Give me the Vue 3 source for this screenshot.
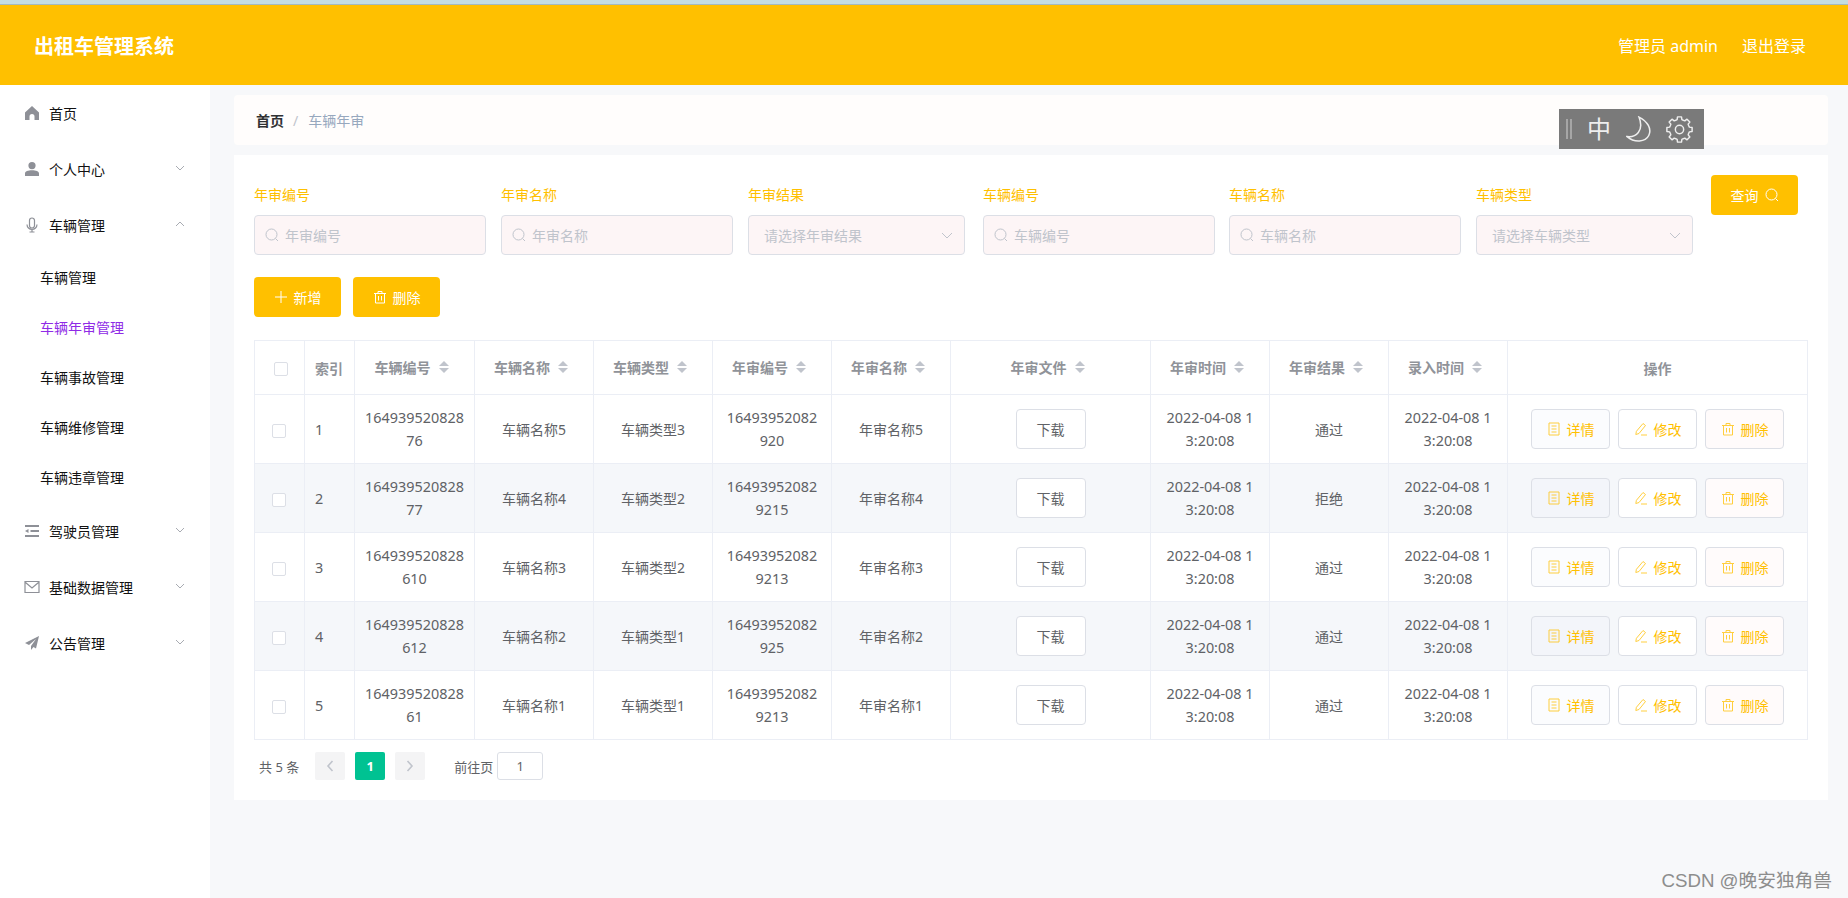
<template>
  <div class="page">
    <div class="top-strip"></div>
    <header class="topbar">
      <div class="title">出租车管理系统</div>
      <div class="user">
        <span>管理员 admin</span>
        <span>退出登录</span>
      </div>
    </header>

    <div class="body">
      <aside class="sidebar">
        <template v-for="m in menus" :key="m.name">
          <div class="menu-item">
            <svg class="menu-icon" viewBox="0 0 16 16">
              <path
                :d="icons[m.icon].d"
                :fill="icons[m.icon].stroke ? 'none' : 'currentColor'"
                :stroke="icons[m.icon].stroke ? 'currentColor' : 'none'"
                stroke-width="1.2"
              />
            </svg>
            <span>{{ m.name }}</span>
            <svg v-if="m.arrow" class="menu-arrow" viewBox="0 0 10 6">
              <path :d="m.open ? 'M1 5l4-4 4 4' : 'M1 1l4 4 4-4'" fill="none" stroke="currentColor" />
            </svg>
          </div>
          <template v-if="m.children">
            <div
              v-for="c in m.children"
              :key="c"
              class="sub-item"
              :class="{ active: c === '车辆年审管理' }"
            >
              {{ c }}
            </div>
          </template>
        </template>
      </aside>

      <main class="main">
        <div class="crumb">
          <span class="crumb-home">首页</span>
          <span class="crumb-sep">/</span>
          <span class="crumb-cur">车辆年审</span>
        </div>

        <section class="card">
          <div class="filters">
            <div v-for="f in filters" :key="f.label" class="field" :class="{ 'is-select': f.select }">
              <label>{{ f.label }}</label>
              <div class="control">
                <svg v-if="!f.select" class="ctl-search" viewBox="0 0 14 14">
                  <circle cx="6.5" cy="6.5" r="5.5" fill="none" stroke="currentColor" />
                  <path d="M10.5 10.5l2.5 2.5" stroke="currentColor" />
                </svg>
                <span>{{ f.placeholder }}</span>
                <svg v-if="f.select" class="ctl-arrow" viewBox="0 0 12 7">
                  <path d="M1 1l5 5 5-5" fill="none" stroke="currentColor" />
                </svg>
              </div>
            </div>
            <button class="btn-primary query">
              查询
              <svg class="btn-icon" viewBox="0 0 14 14">
                <circle cx="6.5" cy="6.5" r="5.5" fill="none" stroke="currentColor" />
                <path d="M10.5 10.5l2.5 2.5" stroke="currentColor" />
              </svg>
            </button>
          </div>

          <div class="actions">
            <button class="btn-primary">
              <svg class="btn-icon" viewBox="0 0 14 14">
                <path d="M7 1v12M1 7h12" fill="none" stroke="currentColor" />
              </svg>
              新增
            </button>
            <button class="btn-primary">
              <svg class="btn-icon" viewBox="0 0 14 14">
                <path :d="trashPath" fill="none" stroke="currentColor" />
              </svg>
              删除
            </button>
          </div>

          <table class="grid">
            <colgroup>
              <col v-for="(w, i) in colWidths" :key="i" :style="{ width: w + 'px' }" />
            </colgroup>
            <thead>
              <tr>
                <th><span class="check head-check"></span></th>
                <th class="left">索引</th>
                <th v-for="h in sortHeads" :key="h">
                  <span class="sort-head">
                    {{ h }}
                    <span class="carets"><i class="up"></i><i class="down"></i></span>
                  </span>
                </th>
                <th>操作</th>
              </tr>
            </thead>
            <tbody>
              <tr v-for="(r, i) in rows" :key="i" :class="{ stripe: i % 2 === 1 }">
                <td><span class="check row-check"></span></td>
                <td class="left num">{{ i + 1 }}</td>
                <td class="num">{{ prefix + r.no }}</td>
                <td>{{ r.name }}</td>
                <td>{{ r.type }}</td>
                <td class="num">{{ auditPrefix + r.audit }}</td>
                <td>{{ r.auditName }}</td>
                <td><button class="plain download">下载</button></td>
                <td class="num">{{ stamp }}</td>
                <td>{{ r.result }}</td>
                <td class="num">{{ stamp }}</td>
                <td>
                  <div class="ops">
                    <button class="plain op op-detail">
                      <svg class="op-icon" viewBox="0 0 14 14">
                        <path d="M2 1h10v12H2zM4.5 4h5M4.5 7h5M4.5 10h5" fill="none" stroke="currentColor" />
                      </svg>
                      详情
                    </button>
                    <button class="plain op op-edit">
                      <svg class="op-icon" viewBox="0 0 14 14">
                        <path d="M9 1.5l2.5 2L5 11.5l-3.2 1 .6-3.2zM7 13h6" fill="none" stroke="currentColor" />
                      </svg>
                      修改
                    </button>
                    <button class="plain op op-del">
                      <svg class="op-icon" viewBox="0 0 14 14">
                        <path :d="trashPath" fill="none" stroke="currentColor" />
                      </svg>
                      删除
                    </button>
                  </div>
                </td>
              </tr>
            </tbody>
          </table>

          <div class="pager">
            <span class="total">共 5 条</span>
            <span class="page-btn">
              <svg viewBox="0 0 8 12"><path d="M6.5 1L2 6l4.5 5" fill="none" stroke="currentColor" stroke-width="1.6" /></svg>
            </span>
            <span class="page-btn current">1</span>
            <span class="page-btn">
              <svg viewBox="0 0 8 12"><path d="M1.5 1L6 6l-4.5 5" fill="none" stroke="currentColor" stroke-width="1.6" /></svg>
            </span>
            <span class="goto">前往页</span>
            <span class="goto-input">1</span>
          </div>
        </section>
      </main>
    </div>

    <div class="float-tools">
      <span class="handle"></span>
      <span class="zh">中</span>
      <svg class="tool moon" viewBox="0 0 24 24">
        <path d="M12 1C20 5 24 12 21 18C18 24 8 25 1 19C9 20 17 14 12 1Z" fill="none" stroke="currentColor" stroke-width="1.4" />
      </svg>
      <svg class="tool gear" viewBox="0 0 26 26">
        <path :d="gearPath" fill="none" stroke="currentColor" stroke-width="1.4" stroke-linejoin="round" />
        <circle cx="13" cy="13" r="4" fill="none" stroke="currentColor" stroke-width="1.4" />
      </svg>
    </div>

    <div class="mark">CSDN @晚安独角兽</div>
  </div>
</template>

<script setup>
const icons = {
  home: { d: "M8 1l7 6.5V15h-4.5v-3.5a2.5 2.5 0 0 0-5 0V15H1V7.5z" },
  user: { d: "M8 1a3.6 3.6 0 1 1 0 7.2A3.6 3.6 0 0 1 8 1zM1 15v-2.5C1 10.2 4 9.2 8 9.2s7 1 7 3.3V15z" },
  mic: { d: "M5.5 3.5a2.5 2.5 0 0 1 5 0v5a2.5 2.5 0 0 1-5 0zM3 7.5a5 5 0 0 0 10 0M8 12.5V15M5.5 15h5", stroke: true },
  indent: { d: "M1 2h14v2H1zM6.5 7H15v2H6.5zM1 12h14v2H1zM1 8l3.5-2v4z" },
  mail: { d: "M1 2.5h14v11H1zM1.5 3.5L8 9l6.5-5.5", stroke: true },
  plane: { d: "M15 1L1 8l4 2 7-6-5 7v4l2.5-3 2.5 1.5z" },
};

const menus = [
  { name: "首页", icon: "home" },
  { name: "个人中心", icon: "user", arrow: true },
  {
    name: "车辆管理",
    icon: "mic",
    arrow: true,
    open: true,
    children: ["车辆管理", "车辆年审管理", "车辆事故管理", "车辆维修管理", "车辆违章管理"],
  },
  { name: "驾驶员管理", icon: "indent", arrow: true },
  { name: "基础数据管理", icon: "mail", arrow: true },
  { name: "公告管理", icon: "plane", arrow: true },
];

const filters = [
  { label: "年审编号", placeholder: "年审编号" },
  { label: "年审名称", placeholder: "年审名称" },
  { label: "年审结果", placeholder: "请选择年审结果", select: true },
  { label: "车辆编号", placeholder: "车辆编号" },
  { label: "车辆名称", placeholder: "车辆名称" },
  { label: "车辆类型", placeholder: "请选择车辆类型", select: true },
];

const colWidths = [50, 50, 120, 119, 119, 119, 119, 200, 119, 119, 119, 300];
const sortHeads = ["车辆编号", "车辆名称", "车辆类型", "年审编号", "年审名称", "年审文件", "年审时间", "年审结果", "录入时间"];

const prefix = "164939520828\n";
const auditPrefix = "16493952082\n";
const stamp = "2022-04-08 1\n3:20:08";

const rows = [
  { no: "76", name: "车辆名称5", type: "车辆类型3", audit: "920", auditName: "年审名称5", result: "通过" },
  { no: "77", name: "车辆名称4", type: "车辆类型2", audit: "9215", auditName: "年审名称4", result: "拒绝" },
  { no: "610", name: "车辆名称3", type: "车辆类型2", audit: "9213", auditName: "年审名称3", result: "通过" },
  { no: "612", name: "车辆名称2", type: "车辆类型1", audit: "925", auditName: "年审名称2", result: "通过" },
  { no: "61", name: "车辆名称1", type: "车辆类型1", audit: "9213", auditName: "年审名称1", result: "通过" },
];

const trashPath = "M1 3.5h12M5 3.5V1.5h4v2M2.5 3.5V13h9V3.5M5.5 6v4.5M8.5 6v4.5";

// gear outline, 8 teeth
function buildGear() {
  const pts = [];
  const teeth = 8;
  for (let i = 0; i < teeth; i++) {
    const a = (i / teeth) * Math.PI * 2;
    const step = (Math.PI * 2) / teeth;
    const ring = [
      [9.6, a - step * 0.5],
      [9.8, a - step * 0.3],
      [12.3, a - step * 0.2],
      [12.3, a + step * 0.2],
      [9.8, a + step * 0.3],
    ];
    ring.forEach(([r, t]) => pts.push([13 + r * Math.cos(t), 13 + r * Math.sin(t)]));
  }
  return "M" + pts.map((p) => p[0].toFixed(2) + " " + p[1].toFixed(2)).join("L") + "Z";
}
const gearPath = buildGear();
</script>

<style>
html,
body {
  margin: 0;
  background: #f7f8fa;
}
</style>

<style scoped>
.page {
  position: relative;
  height: 898px;
  overflow: hidden;
  display: flex;
  flex-direction: column;
  background: #f7f8fa;
  font-family: "Noto Sans", "Noto Sans CJK SC", sans-serif;
  font-size: 14px;
  color: #606266;
}

.top-strip {
  height: 4px;
  flex: none;
  background: #c4dde2;
  border-bottom: 1px solid #a3babf;
}

.topbar {
  flex: none;
  height: 80px;
  background: #ffc000;
  color: #fff;
  display: flex;
  align-items: center;
  justify-content: space-between;
  padding: 0 42px 0 34px;
}
.title {
  font-size: 20px;
  font-weight: 700;
}
.user {
  display: flex;
  gap: 24px;
  font-size: 16px;
}

.body {
  flex: 1;
  display: flex;
  min-height: 0;
}

.sidebar {
  flex: none;
  width: 210px;
  background: #fff;
  color: #111;
}
.menu-item {
  height: 56px;
  display: flex;
  align-items: center;
  padding-left: 24px;
  position: relative;
}
.menu-icon {
  width: 16px;
  height: 16px;
  color: #8e9097;
  margin-right: 9px;
  flex: none;
}
.menu-arrow {
  position: absolute;
  left: 175px;
  top: 24px;
  width: 10px;
  height: 6px;
  color: #a8abb2;
}
.sub-item {
  height: 50px;
  line-height: 50px;
  padding-left: 40px;
}
.sub-item.active {
  color: #8f2be6;
}

.main {
  flex: 1;
  padding: 10px 20px 0 24px;
}
.crumb {
  height: 50px;
  display: flex;
  align-items: center;
  padding-left: 22px;
  background: #fffdfc;
  border-radius: 4px;
  margin-bottom: 10px;
}
.crumb-home {
  font-weight: 700;
  color: #303133;
}
.crumb-sep {
  margin: 0 10px 0 9px;
  color: #c0c4cc;
}
.crumb-cur {
  color: #97a8be;
}

.card {
  background: #fff;
  padding: 20px;
}

.filters {
  display: flex;
  gap: 15px;
}
.field {
  width: 232px;
  flex: none;
}
.field:nth-child(4) {
  margin-right: -1px;
}
.field.is-select {
  width: 217px;
  margin-right: 3px;
}
.field label {
  display: block;
  height: 40px;
  line-height: 40px;
  color: #ffc000;
}
.control {
  height: 40px;
  box-sizing: border-box;
  border: 1px solid #dcdfe6;
  border-radius: 4px;
  background: #fdf5f6;
  color: #c0c4cc;
  display: flex;
  align-items: center;
  padding-left: 10px;
  position: relative;
}
.is-select .control {
  padding-left: 15px;
}
.ctl-search {
  width: 14px;
  height: 14px;
  margin-right: 6px;
}
.ctl-arrow {
  position: absolute;
  right: 11px;
  top: 16px;
  width: 12px;
  height: 7px;
}

.btn-primary {
  width: 87px;
  height: 40px;
  flex: none;
  border: 0;
  border-radius: 4px;
  background: #ffc000;
  color: #fff;
  font: inherit;
  display: inline-flex;
  align-items: center;
  justify-content: center;
  gap: 6px;
  padding: 0;
}
.btn-icon {
  width: 14px;
  height: 14px;
}

.actions {
  display: flex;
  gap: 12px;
  margin: 22px 0 23px;
}

.grid {
  width: 1553px;
  table-layout: fixed;
  border-collapse: collapse;
}
.grid th,
.grid td {
  border: 1px solid #ebeef5;
  padding: 0 10px;
  text-align: center;
  box-sizing: border-box;
}
.grid th {
  height: 54px;
  color: #909399;
  font-weight: 700;
}
.grid td {
  height: 69px;
  line-height: 23px;
  white-space: pre-line;
}
.grid td.num {
  font-size: 14.4px;
}
.grid .left {
  text-align: left;
}
.stripe td {
  background: #f5f7fa;
}

.check {
  display: inline-block;
  vertical-align: middle;
  width: 14px;
  height: 14px;
  box-sizing: border-box;
  border: 1px solid #dcdfe6;
  border-radius: 2px;
  background: #fff;
}
.head-check {
  margin-left: 2px;
}
.row-check {
  margin-left: -2px;
}

.sort-head {
  display: inline-flex;
  align-items: center;
  gap: 8px;
  padding-right: 6px;
  margin-top: -3px;
}
.carets {
  display: inline-flex;
  flex-direction: column;
  gap: 2px;
}
.carets i {
  display: block;
  width: 0;
  height: 0;
  border-left: 5px solid transparent;
  border-right: 5px solid transparent;
}
.carets .up {
  border-bottom: 5px solid #c0c4cc;
}
.carets .down {
  border-top: 5px solid #c0c4cc;
}

.plain {
  height: 40px;
  border: 1px solid #dcdfe6;
  border-radius: 4px;
  background: #fff;
  color: #606266;
  font: inherit;
  padding: 0;
}
.download {
  width: 70px;
}
.ops {
  display: flex;
  justify-content: center;
  gap: 8px;
}
.op {
  width: 79px;
  color: #ffc000;
  display: inline-flex;
  align-items: center;
  justify-content: center;
  gap: 6px;
}
.op-detail {
  background: rgba(235, 240, 250, 0.2);
}
.op-del {
  background: #fffbfb;
}
.op-icon {
  width: 14px;
  height: 14px;
  opacity: 0.75;
}

.pager {
  display: flex;
  align-items: center;
  height: 28px;
  margin-top: 12px;
  font-size: 13px;
}
.total {
  margin-left: 5px;
  margin-right: 16px;
}
.page-btn {
  width: 30px;
  height: 28px;
  margin-right: 10px;
  background: #f4f4f5;
  color: #c0c4cc;
  border-radius: 2px;
  display: flex;
  align-items: center;
  justify-content: center;
}
.page-btn svg {
  width: 8px;
  height: 12px;
}
.page-btn.current {
  background: #00c292;
  color: #fff;
  font-weight: 700;
}
.goto {
  margin-left: 19px;
  margin-right: 4px;
}
.goto-input {
  width: 46px;
  height: 28px;
  box-sizing: border-box;
  border: 1px solid #dcdfe6;
  border-radius: 3px;
  background: #fff;
  display: flex;
  align-items: center;
  justify-content: center;
}

.float-tools {
  position: absolute;
  left: 1559px;
  top: 109px;
  width: 145px;
  height: 40px;
  box-sizing: border-box;
  background: #7a7a7a;
  color: #eee;
  display: flex;
  align-items: center;
  padding-left: 7px;
}
.handle {
  width: 2px;
  height: 20px;
  border-left: 2px solid #a6a6a6;
  border-right: 2px solid #a6a6a6;
  margin-right: 15px;
}
.zh {
  font-size: 24px;
  line-height: 1;
  margin-right: 15px;
}
.tool {
  flex: none;
}
.moon {
  width: 26px;
  height: 26px;
  margin-right: 14px;
}
.gear {
  width: 27px;
  height: 27px;
}

.mark {
  position: absolute;
  right: 16px;
  top: 868px;
  font-size: 18.7px;
  line-height: 26px;
  color: #8d8d8d;
  font-family: "Liberation Sans", "Noto Sans CJK SC", sans-serif;
}
</style>
